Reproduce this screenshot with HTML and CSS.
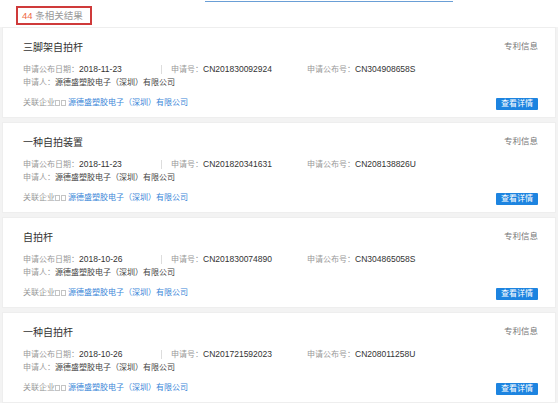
FILE: index.html
```html
<!DOCTYPE html>
<html lang="zh-CN">
<head>
    <meta charset="UTF-8">
    <title>专利信息</title>
    <link rel="stylesheet" href="styles.css">
</head>
<body>
    <!-- 顶部：搜索框下边线 + 结果数 -->
    <header class="result-head">
        <div class="search-line"></div>
        <div class="result-count"><span class="count-num">44</span> 条相关结果</div>
    </header>

    <!-- 专利列表 -->
    <main class="patent-list">
        <div class="patent-card">
            <div class="card-top">
                <div class="patent-title">三脚架自拍杆</div>
                <div class="patent-tag">专利信息</div>
            </div>
            <div class="info-row">
                <div class="col col-date"><span class="label">申请公布日期：</span><span class="num">2018-11-23</span></div>
                <div class="col-sep"></div>
                <div class="col col-no"><span class="label">申请号：</span><span class="num">CN201830092924</span></div>
                <div class="col"><span class="label">申请公布号：</span><span class="num">CN304908658S</span></div>
            </div>
            <div class="info-row">
                <span class="label">申请人：</span><span class="value">源德盛塑胶电子（深圳）有限公司</span>
            </div>
            <div class="card-bottom">
                <div class="related"><span class="label">关联企业</span><span class="box"></span><span class="box"></span><a href="#" class="company-link">源德盛塑胶电子（深圳）有限公司</a></div>
                <a href="#" class="detail-btn">查看详情</a>
            </div>
        </div>

        <div class="patent-card">
            <div class="card-top">
                <div class="patent-title">一种自拍装置</div>
                <div class="patent-tag">专利信息</div>
            </div>
            <div class="info-row">
                <div class="col col-date"><span class="label">申请公布日期：</span><span class="num">2018-11-23</span></div>
                <div class="col-sep"></div>
                <div class="col col-no"><span class="label">申请号：</span><span class="num">CN201820341631</span></div>
                <div class="col"><span class="label">申请公布号：</span><span class="num">CN208138826U</span></div>
            </div>
            <div class="info-row">
                <span class="label">申请人：</span><span class="value">源德盛塑胶电子（深圳）有限公司</span>
            </div>
            <div class="card-bottom">
                <div class="related"><span class="label">关联企业</span><span class="box"></span><span class="box"></span><a href="#" class="company-link">源德盛塑胶电子（深圳）有限公司</a></div>
                <a href="#" class="detail-btn">查看详情</a>
            </div>
        </div>

        <div class="patent-card">
            <div class="card-top">
                <div class="patent-title">自拍杆</div>
                <div class="patent-tag">专利信息</div>
            </div>
            <div class="info-row">
                <div class="col col-date"><span class="label">申请公布日期：</span><span class="num">2018-10-26</span></div>
                <div class="col-sep"></div>
                <div class="col col-no"><span class="label">申请号：</span><span class="num">CN201830074890</span></div>
                <div class="col"><span class="label">申请公布号：</span><span class="num">CN304865058S</span></div>
            </div>
            <div class="info-row">
                <span class="label">申请人：</span><span class="value">源德盛塑胶电子（深圳）有限公司</span>
            </div>
            <div class="card-bottom">
                <div class="related"><span class="label">关联企业</span><span class="box"></span><span class="box"></span><a href="#" class="company-link">源德盛塑胶电子（深圳）有限公司</a></div>
                <a href="#" class="detail-btn">查看详情</a>
            </div>
        </div>

        <div class="patent-card">
            <div class="card-top">
                <div class="patent-title">一种自拍杆</div>
                <div class="patent-tag">专利信息</div>
            </div>
            <div class="info-row">
                <div class="col col-date"><span class="label">申请公布日期：</span><span class="num">2018-10-26</span></div>
                <div class="col-sep"></div>
                <div class="col col-no"><span class="label">申请号：</span><span class="num">CN201721592023</span></div>
                <div class="col"><span class="label">申请公布号：</span><span class="num">CN208011258U</span></div>
            </div>
            <div class="info-row">
                <span class="label">申请人：</span><span class="value">源德盛塑胶电子（深圳）有限公司</span>
            </div>
            <div class="card-bottom">
                <div class="related"><span class="label">关联企业</span><span class="box"></span><span class="box"></span><a href="#" class="company-link">源德盛塑胶电子（深圳）有限公司</a></div>
                <a href="#" class="detail-btn">查看详情</a>
            </div>
        </div>
    </main>
</body>
</html>
```

FILE: styles.css
```css
/* 기본 초기화 */
* {
    margin: 0;
    padding: 0;
    box-sizing: border-box;
}

body {
    font-family: "Liberation Sans", "Noto Sans CJK SC", sans-serif;
    font-size: 8px;
    color: #333;
    background-color: #fff;
    overflow: hidden;
}

/* 상단 영역 */
.result-head {
    height: 27px;
    padding-top: 1px;
}

.search-line {
    width: 248px;
    height: 1px;
    margin-left: 205px;
    background-color: #6a9fd6;
}

.result-count {
    display: inline-block;
    width: 76px;
    height: 19px;
    margin: 4px 0 0 16px;
    padding-left: 4px;
    border: 2px solid #cf3a3a;
    line-height: 15px;
    font-size: 9.5px;
    color: #999;
}

.count-num {
    color: #ef6a45;
}

/* 목록 */
.patent-list {
    display: flex;
    flex-direction: column;
    gap: 4px;
    padding: 0 2px;
    background-color: #f3f3f3;
}

.patent-card {
    height: 91px;
    padding: 13px 17px 0 20px;
    background-color: #fff;
    border: 1px solid #eeeeee;
}

.card-top {
    display: flex;
    justify-content: space-between;
    align-items: flex-start;
    line-height: 14px;
}

.patent-title {
    font-size: 10px;
    color: #333;
}

.patent-tag {
    margin-top: -2px;
    font-size: 8.5px;
    color: #777;
}

.info-row {
    display: flex;
    align-items: center;
    height: 14px;
    line-height: 14px;
    white-space: nowrap;
}

.card-top + .info-row {
    margin-top: 7px;
}

.col-date {
    width: 138px;
}

.col-sep {
    width: 1px;
    height: 9px;
    margin-right: 9px;
    background-color: #ddd;
}

.col-no {
    width: 136px;
}

.label {
    color: #999;
}

.num {
    font-size: 8.5px;
    color: #333;
}

.value {
    color: #444;
}

/* 하단: 관련 기업 + 버튼 */
.card-bottom {
    display: flex;
    justify-content: space-between;
    align-items: center;
    margin-top: 6px;
    height: 14px;
}

.related {
    display: flex;
    align-items: center;
    line-height: 14px;
}

.box {
    display: inline-block;
    width: 5px;
    height: 6px;
    margin-right: 1px;
    border: 1px solid #c4c4c4;
}

.company-link {
    margin-left: 1px;
    color: #3a86d8;
    text-decoration: none;
}

.detail-btn {
    display: block;
    height: 12px;
    margin-top: 2px;
    padding: 0 5px;
    line-height: 12px;
    font-size: 8px;
    color: #fff;
    background-color: #1d84e0;
    border-radius: 1px;
    text-decoration: none;
}
```
